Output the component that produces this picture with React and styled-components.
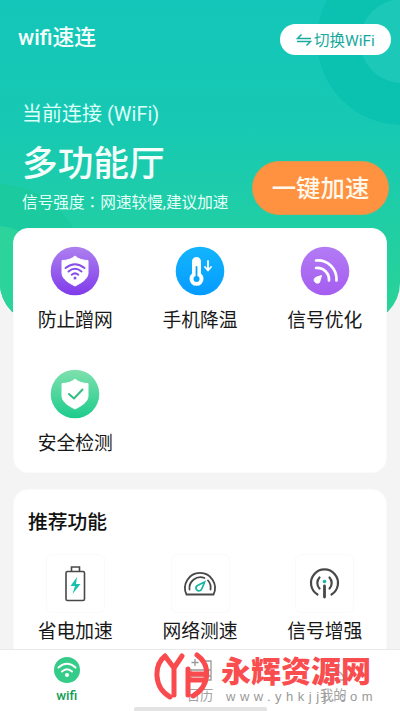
import React from 'react';
import styled, { createGlobalStyle } from 'styled-components';

const Global = createGlobalStyle`
  * { box-sizing: border-box; }
  body { margin: 0; background: #f4f4f4; font-family: Roboto, "Noto Sans CJK SC", sans-serif; }
`;

const Screen = styled.div`
  position: relative;
  display: flex;
  flex-direction: column;
  width: 400px;
  height: 711px;
  overflow: hidden;
  background: #f4f4f4;
`;

const Hero = styled.header`
  position: relative;
  flex: none;
  height: 323px;
  padding: 24px 9px 0 18px;
  overflow: hidden;
  border-radius: 0 0 40px 40px;
  background: linear-gradient(#13c6b9 0%, #17c9b3 40%, #2ad396 100%);
  color: #f4fffc;
`;

const Rings = styled.svg`
  position: absolute;
  inset: 0;
`;

const TopBar = styled.div`
  position: relative;
  display: flex;
  justify-content: space-between;
`;

const Title = styled.h1`
  margin: 0;
  font-size: 21.8px;
  font-weight: 500;
  line-height: 28px;
`;

const SwitchButton = styled.button`
  display: flex;
  align-items: center;
  gap: 2px;
  width: 111px;
  height: 31px;
  padding: 3px 0 0 16px;
  border: 0;
  border-radius: 16px;
  background: #fff;
  color: #18aa9e;
  font: 15.5px/28px Roboto, "Noto Sans CJK SC", sans-serif;
  white-space: nowrap;
`;

const Connection = styled.div`
  position: relative;
  display: flex;
  justify-content: space-between;
  padding: 44px 2px 0 4px;
`;

const Caption = styled.div`
  padding-top: 1px;
  font-size: 20px;
  line-height: 28px;
  color: #dcfff8;
`;

const NetworkName = styled.div`
  margin-top: 14px;
  font-size: 35.7px;
  font-weight: 500;
  line-height: 44px;
`;

const Strength = styled.div`
  margin-top: 5px;
  font-size: 15.65px;
  line-height: 22px;
  color: #e4fff8;
  white-space: nowrap;
`;

const Colon = styled.span`
  font-family: "Noto Sans CJK TC", sans-serif;
`;

const BoostButton = styled.button`
  flex: none;
  width: 137px;
  height: 54px;
  margin-top: 62px;
  padding: 2px 0 0;
  border: 1px solid #d99b50;
  border-radius: 27px;
  background: #ff9240;
  color: #fff8ec;
  font: 500 24.4px/50px Roboto, "Noto Sans CJK SC", sans-serif;
`;

const Card = styled.section`
  position: relative;
  flex: none;
  width: 374px;
  margin: ${p => p.$top}px 0 0 13px;
  height: ${p => p.$height}px;
  border: 1px solid #fbfbfb;
  border-radius: 15px;
  background: #fff;
`;

const Grid = styled.div`
  display: grid;
  justify-content: center;
  grid-template-columns: repeat(3, 124.7px);
  grid-auto-rows: 122.5px;
`;

const Feature = styled.div`
  display: flex;
  flex-direction: column;
  align-items: center;
  padding-top: ${p => p.$pad}px;
`;

const Label = styled.div`
  margin-top: ${p => p.$gap}px;
  font-size: 18.8px;
  line-height: 26px;
  color: #181818;
  white-space: nowrap;
`;

const IconTile = styled.div`
  display: flex;
  align-items: center;
  justify-content: center;
  width: 59px;
  height: 59px;
  border: 1px solid #fafafa;
  border-radius: 6px;
`;

const SectionTitle = styled.h2`
  margin: 19px 0 0 14px;
  height: 45px;
  font-size: 19.8px;
  font-weight: 500;
  line-height: 28px;
  color: #111;
`;

const TabBar = styled.nav`
  position: absolute;
  left: 0;
  right: 0;
  bottom: 0;
  display: grid;
  grid-template-columns: repeat(3, 1fr);
  height: 62px;
  border-top: 1px solid #e9e9e9;
  background: #fff;
`;

const Tab = styled.div`
  display: flex;
  flex-direction: column;
  align-items: center;
  padding-top: 6px;
  font-size: 13.3px;
  line-height: 16px;
  color: ${p => (p.$active ? '#139c55' : '#a3a3a3')};
  font-weight: ${p => (p.$active ? 500 : 400)};
`;

const TabIcon = styled.svg`
  width: 28px;
  height: 28px;
  margin-bottom: 4px;
`;

const HomeHandle = styled.div`
  position: absolute;
  left: 134px;
  bottom: 0;
  width: 133px;
  height: 4px;
  border-radius: 2px 2px 0 0;
  background: #e3e3e3;
`;

const Brand = styled.div`
  position: absolute;
  left: 154px;
  top: 651px;
  display: flex;
  gap: 9px;
`;

const BrandText = styled.div`
  padding: 0 0 0 3px;
`;

const BrandName = styled.div`
  color: #f94d50;
  font: 900 30px/36px "Noto Sans CJK SC", sans-serif;
  white-space: nowrap;
`;

const BrandUrl = styled.div`
  margin: 1px 0 0 5px;
  color: #999;
  font: 13px/17px "Liberation Sans", sans-serif;
  letter-spacing: 4.5px;
  white-space: nowrap;
`;

const shield = 'M25 10 C22 13 17 14.500 12 14.500 V27 C12 33 19 37 25 40 C31 37 38 33 38 27 V14.500 C33 14.500 28 13 25 10Z';

function Badge({ id, from, to, children }) {
  return (
    <svg width="50" height="50" viewBox="0 0 50 50">
      <defs>
        <linearGradient id={id} x2="0" y2="1">
          <stop stopColor={from} />
          <stop offset="1" stopColor={to} />
        </linearGradient>
      </defs>
      <circle cx="25" cy="25" r="24.3" fill={`url(#${id})`} />
      {children}
    </svg>
  );
}

const ShieldWifi = () => (
  <Badge id="violet" from="#ad80ef" to="#803bea">
    <path d={shield} fill="#fff" stroke="#fff" strokeLinejoin="round" />
    <g fill="none" stroke="#8950e5" strokeWidth="2" strokeLinecap="round">
      <path d="M15.500 22 Q25 14.500 34.500 22M18.500 25.500 Q25 20 31.500 25.500M21.700 28.700 Q25 26 28.300 28.700" />
    </g>
    <circle cx="25" cy="32" r="1.500" fill="#8950e5" />
  </Badge>
);

const Thermometer = () => (
  <Badge id="blue" from="#13b5fc" to="#059bff">
    <path d="M17 15.500a4.500 4.500 0 0 1 9 0v12a7 7 0 1 1-9 0Z" fill="#fff" />
    <path d="M21.500 21v12" stroke="#0aa5fb" strokeWidth="1.800" strokeLinecap="round" />
    <circle cx="21.500" cy="33" r="3" fill="#0aa5fb" />
    <path d="M33 15v9m-3-3 3 3.500 3-3.500" fill="none" stroke="#fff" strokeWidth="1.800" strokeLinecap="round" strokeLinejoin="round" />
  </Badge>
);

const Antenna = () => (
  <Badge id="purple" from="#b27bf4" to="#a55df0">
    <path d="M16 14.500C28 13.500 37 23 36.500 34.500M16 22C24 21.500 29.500 27.500 29 34.500" fill="none" stroke="#fff" strokeWidth="2.700" strokeLinecap="round" />
    <path d="M21.500 29.500 15.500 31.500C12 34 16 39 19.500 36.500L21.500 29.500Z" fill="#fff" stroke="#fff" strokeLinejoin="round" />
  </Badge>
);

const ShieldCheck = () => (
  <Badge id="green" from="#7fe0ad" to="#1dcc8c">
    <path d={shield} fill="#fff" stroke="#fff" strokeLinejoin="round" />
    <path d="m19 25 5 4.500 8.500-9" fill="none" stroke="#35bd86" strokeWidth="2" strokeLinecap="round" strokeLinejoin="round" />
  </Badge>
);

const Battery = () => (
  <svg width="40" height="40" viewBox="0 0 40 40" fill="none" stroke="#484848" strokeWidth="1.600">
    <rect x="11" y="7.500" width="18.500" height="29" rx="1.500" />
    <path d="M16.500 7V3h8v4" />
    <path d="M22 13 15.500 22H20L17.500 30l8-10H21Z" fill="#1bbfae" stroke="none" />
  </svg>
);

const Gauge = () => (
  <svg width="40" height="40" viewBox="0 0 40 40" fill="none" stroke="#484848" strokeWidth="1.800" strokeLinecap="round">
    <path d="M6.500 30.500A15 15 0 1 1 33.500 30.500Z" strokeLinejoin="round" />
    <path d="M9.500 25.500A11 11 0 0 1 24.500 14M28 16.500A11 11 0 0 1 30.500 25.500" />
    <path d="M24.500 18 17.500 21.500C14.500 23.500 16.500 28 20.500 26.500Q22 25.500 24.500 18Z" stroke="#1bb5a4" />
  </svg>
);

const Broadcast = () => (
  <svg width="40" height="40" viewBox="0 0 40 40" fill="none" stroke="#484848" strokeWidth="2.200" strokeLinecap="round">
    <path d="M12.500 30.500a13.500 13.500 0 1 1 14 0M14.500 24.500a8 8 0 0 1 0-11M24.500 24.500a8 8 0 0 0 0-11" />
    <path d="M19.500 22v11" strokeWidth="2.800" />
    <circle cx="19.500" cy="17.500" r="1.800" fill="#1bb5a4" stroke="none" />
  </svg>
);

const features = [
  ['防止蹭网', ShieldWifi],
  ['手机降温', Thermometer],
  ['信号优化', Antenna],
  ['安全检测', ShieldCheck],
];

const recommended = [
  ['省电加速', Battery],
  ['网络测速', Gauge],
  ['信号增强', Broadcast],
];

export default function App() {
  return (
    <Screen>
      <Global />
      <Hero>
        <Rings width="400" height="323">
          <circle cx="402" cy="40" r="85" fill="#0bc1b0" />
          <circle cx="402" cy="41" r="42" fill="#1cc8b7" />
          <circle cx="-2" cy="270" r="86" fill="#1bca9f" />
          <circle cx="-2" cy="270" r="44" fill="#2cd49b" />
        </Rings>
        <TopBar>
          <Title>wifi速连</Title>
          <SwitchButton>
            <svg width="16" height="14" viewBox="0 0 16 14" fill="none" stroke="currentColor" strokeWidth="1.500">
              <path d="M5.500 0.500 1.500 4.500H15M1 7.500h13.500l-4 4" />
            </svg>
            切换WiFi
          </SwitchButton>
        </TopBar>
        <Connection>
          <div>
            <Caption>当前连接 (WiFi)</Caption>
            <NetworkName>多功能厅</NetworkName>
            <Strength>信号强度<Colon lang="zh-TW">：</Colon>网速较慢,建议加速</Strength>
          </div>
          <BoostButton>一键加速</BoostButton>
        </Connection>
      </Hero>
      <Card $top={-95} $height={245}>
        <Grid>
          {features.map(([name, Icon]) => (
            <Feature key={name} $pad={17}>
              <Icon />
              <Label $gap={12}>{name}</Label>
            </Feature>
          ))}
        </Grid>
      </Card>
      <Card $top={16} $height={240}>
        <SectionTitle>推荐功能</SectionTitle>
        <Grid>
          {recommended.map(([name, Icon]) => (
            <Feature key={name} $pad={0}>
              <IconTile><Icon /></IconTile>
              <Label $gap={6}>{name}</Label>
            </Feature>
          ))}
        </Grid>
      </Card>
      <TabBar>
        <Tab $active>
          <TabIcon viewBox="0 0 28 28">
            <circle cx="14" cy="14" r="13" fill="#35cb88" />
            <path d="M5.500 11.500Q14 4 22.500 11.500M9 15.500Q14 11 19 15.500" fill="none" stroke="#fff" strokeWidth="2" strokeLinecap="round" />
            <circle cx="14" cy="19" r="2" fill="#fff" />
          </TabIcon>
          wifi
        </Tab>
        <Tab>
          <TabIcon viewBox="0 0 28 28" fill="none" stroke="#999" strokeWidth="1.300">
            <path d="M9 3v7M5.500 6.500h7M15 5h10v19H5V13M5 14h20M5 20h20" />
          </TabIcon>
          日历
        </Tab>
        <Tab>
          <TabIcon viewBox="0 0 28 28" fill="none" stroke="#aaa" strokeWidth="1.500">
            <circle cx="14" cy="9" r="6" />
            <path d="M3 24v-2q2-6 8-7h6q6 1 8 7v2Z" />
          </TabIcon>
          我的
        </Tab>
      </TabBar>
      <HomeHandle />
      <Brand>
        <svg width="55" height="50" viewBox="0 0 55 50" fill="none" stroke="#f94b4e" strokeWidth="5" strokeLinecap="round" strokeLinejoin="round">
          <path d="M11 5C0 14-1 36 16 46M11 5 20 17 28 5M20 17V44M34 18V44M34 23H51M34 29H51M43 4C57 14 56 35 39 45" />
        </svg>
        <BrandText>
          <BrandName>永辉资源网</BrandName>
          <BrandUrl>www.yhkjjj.com</BrandUrl>
        </BrandText>
      </Brand>
    </Screen>
  );
}
